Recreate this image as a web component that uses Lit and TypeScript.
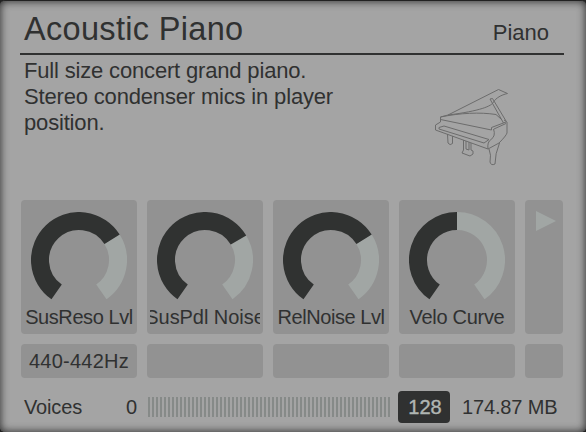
import { LitElement, html, svg, css } from "lit";
import { customElement, property } from "lit/decorators.js";

const START = -145;
const SWEEP = 290;

/** Point on a circle, angle in degrees clockwise from twelve o'clock. */
const at = (deg: number, r = 39) => {
  const a = (deg * Math.PI) / 180;
  return `${(48 + r * Math.sin(a)).toFixed(3)} ${(48 - r * Math.cos(a)).toFixed(3)}`;
};

const arc = (from: number, to: number) =>
  `M${at(from)}A39 39 0 ${to - from > 180 ? 1 : 0} 1 ${at(to)}`;

@customElement("macro-knob")
export class MacroKnob extends LitElement {
  @property() label = "";
  @property({ type: Number }) value = 0;
  /** Letter spacing of the label, in pixels. */
  @property({ type: Number }) tracking = 0;

  static styles = css`
    :host { display: block; }
    .card {
      box-sizing: border-box;
      height: 134px;
      padding: 12px 3px 0;
      border-radius: 4px;
      background: #929292;
      display: flex;
      flex-direction: column;
      align-items: center;
    }
    .dial { display: block; width: 96px; height: 90px; fill: none; stroke-width: 18; }
    .rest { stroke: #a1a6a4; }
    .set { stroke: #303231; }
    .label {
      width: 110px;
      height: 30px;
      overflow: hidden;
      display: flex;
      justify-content: center;
      font-size: 20px;
      line-height: 30px;
      white-space: nowrap;
    }
  `;

  render() {
    const split = START + SWEEP * this.value;
    return html`<div class="card">
      <svg class="dial" viewBox="0 0 96 90">
        <path class="rest" d=${arc(split, START + SWEEP)} />
        <path class="set" d=${arc(START, split)} />
      </svg>
      <div class="label"><span style="letter-spacing:${this.tracking}px">${this.label}</span></div>
    </div>`;
  }
}

@customElement("app-root")
export class AppRoot extends LitElement {
  private knobs = [
    { label: "SusReso Lvl", value: 0.7, tracking: -0.42 },
    { label: "SusPdl Noise", value: 0.704, tracking: -0.05 },
    { label: "RelNoise Lvl", value: 0.7, tracking: -0.44 },
    { label: "Velo Curve", value: 0.5, tracking: -0.3 },
  ];

  static styles = css`
    :host {
      display: block;
      width: 586px;
      height: 432px;
      overflow: hidden;
      background: #222;
      color: #303131;
      font-family: "Liberation Sans", Arial, sans-serif;
      font-size: 20px;
    }
    .panel {
      box-sizing: border-box;
      height: 432px;
      padding: 9px 23px 0 21px;
      border-top: 1px solid #222;
      border-radius: 5px;
      background: #a4a4a4;
      box-shadow: inset 0 0 8px 0 #222;
    }
    header {
      box-sizing: border-box;
      height: 45px;
      margin: 0 -1px;
      padding: 0 15px 0 4px;
      border-bottom: 2px solid #303131;
      display: flex;
      justify-content: space-between;
    }
    h1 { margin: 0; font-size: 32.5px; line-height: 38px; font-weight: 400; letter-spacing: 0.32px; }
    .category { font-size: 22px; line-height: 46px; }
    .about { height: 145px; display: flex; justify-content: space-between; }
    .about p { margin: 3px 0 0 3px; font-size: 22px; line-height: 26px; letter-spacing: -0.17px; }
    .piano {
      width: 80px;
      height: 80px;
      margin: 31px 53px 0 0;
      fill: none;
      stroke: #6c6c6c;
      stroke-width: 1;
      stroke-linejoin: round;
    }
    .grid { display: grid; grid-template-columns: repeat(4, 116px) 38px; gap: 10px; }
    .slot {
      height: 34px;
      border-radius: 4px;
      background: #929292;
      text-align: center;
      line-height: 34px;
      letter-spacing: 0.25px;
    }
    .next { box-sizing: border-box; padding: 11px 0 0 11px; border-radius: 4px; background: #929292; }
    .next svg { display: block; fill: #a1a6a4; }
    footer { height: 32px; margin-top: 13px; display: flex; align-items: center; white-space: nowrap; }
    .voices { width: 102px; padding-left: 3px; letter-spacing: -0.15px; }
    .zero { width: 22px; }
    .meter {
      width: 242px;
      height: 20px;
      background: repeating-linear-gradient(90deg, #868a88 0 2px, transparent 2px 4px);
    }
    .max {
      box-sizing: border-box;
      width: 52px;
      height: 32px;
      margin: 0 12px 0 8px;
      padding-left: 2px;
      border-radius: 4px;
      background: #303131;
      color: #b0b6b3;
      line-height: 32px;
      text-align: center;
      -webkit-text-stroke: 0.4px #b0b6b3;
    }
    .memory { letter-spacing: -0.15px; }
  `;

  private piano = svg`
    <path d="M18 29L68.500 3.500L77.500 7.500C71 9 66 12 63.500 16C62 20 50 25 18 29Z" />
    <path d="M10.500 31C30 27 50 26 66 28.500L71 33" />
    <path d="M18 29L10.500 31V36L5.500 39V44L58 63L69 57Q76 50 77 47V36L74 34" />
    <path d="M10.500 33.500L61.500 44V41.500L76 36M64 43L76 37.500" />
    <path d="M63.500 43Q66 50 61 53.500Q57 56 58 63" />
    <path d="M14 40L59 53.500L54 57L9 43V41.500Z" />
    <path d="M60 13L62.500 12.500L76 35M60 13L73.500 37" />
    <path d="M17.500 48L18 57Q20 60 22.500 57.500V50" />
    <path d="M33.500 54V64L32 67L40 70L43 68V65L41 64V57M36 55V63L39 64V56" />
    <path d="M59 63Q61.500 69 60 76Q61 80 65 78Q65 68 69.500 57" />
  `;

  render() {
    return html`<div class="panel">
      <header><h1>Acoustic Piano</h1><span class="category">Piano</span></header>
      <section class="about">
        <p>Full size concert grand piano.<br />Stereo condenser mics in player<br />position.</p>
        <svg class="piano" viewBox="0 0 80 80">${this.piano}</svg>
      </section>
      <section class="grid">
        ${this.knobs.map(
          (k) => html`<macro-knob .label=${k.label} .value=${k.value} .tracking=${k.tracking}></macro-knob>`
        )}
        <div class="next"><svg width="20" height="20"><path d="M0 0L20 10L0 20Z" /></svg></div>
        ${["440-442Hz", "", "", "", ""].map((t) => html`<div class="slot">${t}</div>`)}
      </section>
      <footer>
        <span class="voices">Voices</span><span class="zero">0</span>
        <div class="meter"></div>
        <div class="max">128</div>
        <span class="memory">174.87 MB</span>
      </footer>
    </div>`;
  }
}
